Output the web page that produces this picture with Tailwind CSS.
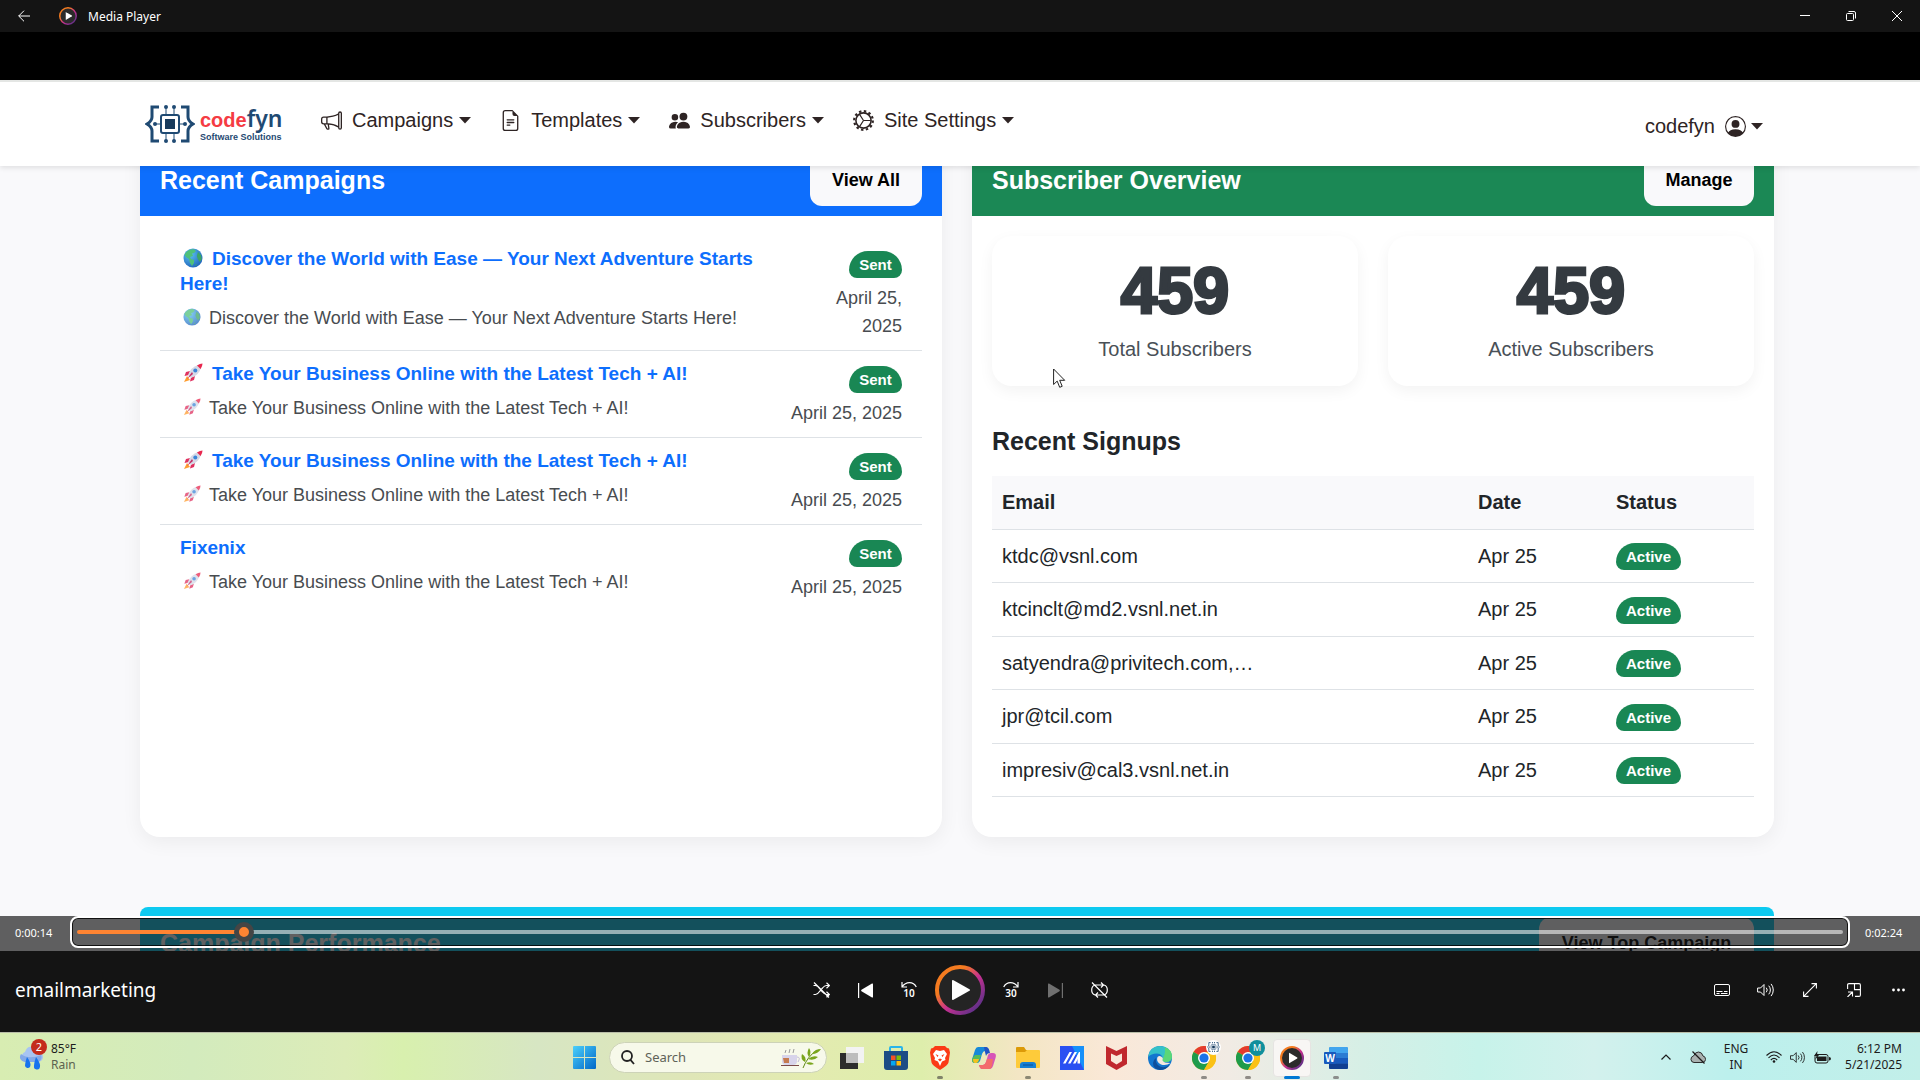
<!DOCTYPE html>
<html lang="en">
<head>
  <meta charset="UTF-8" />
  <meta name="viewport" content="width=device-width, initial-scale=1" />
  <title>Media Player</title>
  <script src="https://cdn.jsdelivr.net/npm/@tailwindcss/browser@4"></script>
</head>
<body class="h-screen flex flex-col overflow-hidden bg-black font-['Noto_Sans',sans-serif]">

  <!-- shared icons -->
  <svg class="absolute w-0 h-0" aria-hidden="true">
    <defs>
      <linearGradient id="ring" x1="0" y1="0" x2="1" y2="1"><stop offset="0.3" stop-color="#f47b20"/><stop offset="0.55" stop-color="#c73090"/><stop offset="0.9" stop-color="#5d3088"/></linearGradient>
      <radialGradient id="sea" cx="0.35" cy="0.3" r="0.8"><stop offset="0" stop-color="#5cc4f2"/><stop offset="1" stop-color="#1d5fb8"/></radialGradient>
      <linearGradient id="win" x1="0" y1="0" x2="1" y2="1"><stop offset="0" stop-color="#4cd0fb"/><stop offset="1" stop-color="#0067c8"/></linearGradient>
    </defs>
    <symbol id="globe" viewBox="0 0 20 20">
      <circle cx="10" cy="10" r="9.5" fill="url(#sea)"/>
      <path d="M3 4.500Q6 1 11 1.200L13 3 11 5 9 5.500 10 8 7 9 8 11 11 12 11 15 9 18 7 15 6 11 3 9 1.500 6.500Z" fill="#4fc07a"/>
      <path d="M15 4l3 3 .8 4-2 3-2-3-1-3zM12 17l2-1-1 2z" fill="#3da567"/>
    </symbol>
    <symbol id="rocket" viewBox="0 0 20 20">
      <path d="M4 13l-3 6 6-2z" fill="#ff9d2e"/>
      <path d="M7 8L3 9 1.500 13 6 12zM12 13l-1 4-4 1.500 1-4z" fill="#e0315f"/>
      <path d="M5 12Q8 4 15 2l3 3Q16 12 8 15z" fill="#d5d9e6"/>
      <path d="M14 2.400Q17 .5 19.500.5 19.500 3 17.600 6z" fill="#e8284f"/>
      <circle cx="12.300" cy="7.500" r="2" fill="#3b86d8"/>
      <path d="M9 9L4 16l6-5z" fill="#c42e66"/>
    </symbol>
    <symbol id="caret" viewBox="0 0 12 7"><path d="M0 0h12L6 6.500z" fill="currentColor"/></symbol>
    <symbol id="player" viewBox="0 0 24 24">
      <circle cx="12" cy="12" r="11" fill="#2b2b2b" stroke="url(#ring)" stroke-width="2"/>
      <path d="M9 7.200v9.600q0 .6.600.3l7.600-4.600q.6-.5 0-1L9.600 6.900Q9 6.600 9 7.200z" fill="#fff"/>
    </symbol>
    <symbol id="speaker" viewBox="0 0 18 14" fill="none" stroke="currentColor" stroke-linecap="round" stroke-linejoin="round">
      <path d="M1 5h2.500L7 1.500v11L3.500 9H1z"/><path d="M9.500 5a3 3 0 0 1 0 4"/><path d="M12 3a6 6 0 0 1 0 8"/><path d="M14.300 1.200a9 9 0 0 1 0 11.600"/>
    </symbol>
    <symbol id="chrome" viewBox="0 0 24 24">
      <circle cx="12" cy="12" r="12" fill="#fbc116"/>
      <path d="M12 12L1.600 6A12 12 0 0 1 22.400 6z" fill="#e33b2e"/>
      <path d="M12 12L1.600 6A12 12 0 0 0 12 24l5.200-9z" fill="#1e9b4b"/>
      <path d="M12 6h10.400A12 12 0 0 1 12 24l5.200-9z" fill="#fbc116"/>
      <circle cx="12" cy="12" r="6" fill="#fff"/><circle cx="12" cy="12" r="4.600" fill="#1a73e8"/>
    </symbol>
    <symbol id="chip" viewBox="0 0 50 44" fill="none" stroke="#1f4a73" stroke-width="3">
      <path d="M14 5H7v10q0 4-5 7 5 3 5 7v10h7M36 5h7v10q0 4 5 7-5 3-5 7v10h-7"/>
      <rect x="16" y="13" width="18" height="18" rx="2" stroke-width="2"/><rect x="20" y="17" width="10" height="10" fill="#173a5c" stroke="none"/>
      <path d="M21 13V6M29 13V6M21 31v7M29 31v7M16 22H9M34 22h7" stroke-width="1"/>
      <g fill="#1f4a73" stroke="none"><circle cx="21" cy="5" r="2"/><circle cx="29" cy="5" r="2"/><circle cx="21" cy="39" r="2"/><circle cx="29" cy="39" r="2"/><circle cx="10" cy="22" r="2"/><circle cx="40" cy="22" r="2"/></g>
    </symbol>
  </svg>

  <!-- title bar -->
  <header class="h-8 shrink-0 bg-[#141414] text-white flex items-center justify-between">
    <div class="flex items-center">
      <button aria-label="Back" class="w-12 h-8 grid place-items-center"><svg class="w-3 h-3" viewBox="0 0 12 12" fill="none" stroke="currentColor"><path d="M12 6H.7M6 .7L.7 6 6 11.300"/></svg></button>
      <svg class="w-[18px] h-[18px] ml-[11px] mr-[11px]"><use href="#player"/></svg>
      <span class="text-xs pt-[2px]">Media Player</span>
    </div>
    <div class="flex">
      <button aria-label="Minimize" class="w-[46px] h-8 grid place-items-center"><svg class="w-[10px] h-[10px]" viewBox="0 0 10 10" stroke="currentColor"><path d="M0 4.500h10"/></svg></button>
      <button aria-label="Restore" class="w-[46px] h-8 grid place-items-center"><svg class="w-[10px] h-[10px]" viewBox="0 0 10 10" fill="none" stroke="currentColor"><rect x=".5" y="2.500" width="7" height="7" rx="1"/><path d="M2.500.5H8q1.500 0 1.500 1.500v5.500"/></svg></button>
      <button aria-label="Close" class="w-[46px] h-8 grid place-items-center"><svg class="w-[10px] h-[10px]" viewBox="0 0 10 10" stroke="currentColor"><path d="M0 0l10 10M10 0L0 10"/></svg></button>
    </div>
  </header>

  <!-- video -->
  <section class="relative flex-1 min-h-0 overflow-hidden pt-12 font-['Liberation_Sans',Arial,sans-serif]">
    <div class="h-full bg-[#f9f9fb] overflow-hidden">
      <nav class="relative z-10 h-[86px] bg-white border-t-2 border-[#e4e6e4] shadow-[0_2px_5px_rgba(0,0,0,0.1)] pl-[145px] pr-[157px] flex items-center justify-between text-xl text-[#2e2424]">
        <div class="flex items-center">
          <a href="#" class="flex items-center w-[138px] mr-[38px]">
            <svg class="w-[50px] h-[44px] shrink-0"><use href="#chip"/></svg>
            <span class="flex flex-col pl-[5px]">
              <span class="flex items-baseline h-[25px] leading-[25px] font-bold"><span class="text-[#f53b43] text-xl font-['Liberation_Sans_Narrow','Liberation_Sans',sans-serif]">code</span><span class="text-[#1f4a73] text-[23px] font-semibold font-['Noto_Sans',sans-serif]">fyn</span></span>
              <span class="text-[#1f4a73] text-[9px] leading-3 font-bold whitespace-nowrap">Software Solutions</span>
            </span>
          </a>
          <div class="flex items-center gap-[29px] pb-2">
            <button class="flex items-center">
              <svg class="w-[21px] h-[21px] mr-[10px]" viewBox="0 0 16 16" fill="currentColor"><path d="M13 2.500a1.500 1.500 0 0 1 3 0v11a1.500 1.500 0 0 1-3 0v-.214c-2.162-1.241-4.490-1.843-6.912-2.083l.405 2.712A1 1 0 0 1 5.510 15.100h-.548a1 1 0 0 1-.916-.599l-1.850-3.490-.202-.003A2.014 2.014 0 0 1 0 9V7a2.020 2.020 0 0 1 1.992-2.013 75 75 0 0 0 2.483-.075c3.043-.154 6.148-.849 8.525-2.199zm1 0v11a.5.5 0 0 0 1 0v-11a.5.5 0 0 0-1 0m-1 1.350c-2.344 1.205-5.209 1.842-8 2.033v4.233q.27.015.537.036c2.568.189 5.093.744 7.463 1.993zm-9 6.215v-4.130a95 95 0 0 1-1.992.052A1.020 1.020 0 0 0 1 7v2c0 .55.448 1.002 1.006 1.009A61 61 0 0 1 4 10.065m-.657.975 1.609 3.037.01.024h.548l-.002-.014-.443-2.966a68 68 0 0 0-1.722-.082z"/></svg>
              Campaigns<svg class="w-3 h-[7px] ml-[6px]"><use href="#caret"/></svg>
            </button>
            <button class="flex items-center">
              <svg class="w-[21px] h-[21px] mr-[10px]" viewBox="0 0 16 16" fill="currentColor"><path d="M5.500 7a.5.5 0 0 0 0 1h5a.5.5 0 0 0 0-1zM5 9.500a.5.5 0 0 1 .5-.5h5a.5.5 0 0 1 0 1h-5a.5.5 0 0 1-.5-.5m0 2a.5.5 0 0 1 .5-.5h2a.5.5 0 0 1 0 1h-2a.5.5 0 0 1-.5-.5"/><path d="M9.500 0H4a2 2 0 0 0-2 2v12a2 2 0 0 0 2 2h8a2 2 0 0 0 2-2V4.500zm0 1v2A1.500 1.500 0 0 0 11 4.500h2V14a1 1 0 0 1-1 1H4a1 1 0 0 1-1-1V2a1 1 0 0 1 1-1z"/></svg>
              Templates<svg class="w-3 h-[7px] ml-[6px]"><use href="#caret"/></svg>
            </button>
            <button class="flex items-center">
              <svg class="w-[21px] h-[21px] mr-[10px]" viewBox="0 0 16 16" fill="currentColor"><path d="M7 14s-1 0-1-1 1-4 5-4 5 3 5 4-1 1-1 1zm4-6a3 3 0 1 0 0-6 3 3 0 0 0 0 6m-5.784 6A2.240 2.240 0 0 1 5 13c0-1.355.68-2.750 1.936-3.720A6.300 6.300 0 0 0 5 9c-4 0-5 3-5 4s1 1 1 1zM4.500 8a2.500 2.500 0 1 0 0-5 2.500 2.500 0 0 0 0 5"/></svg>
              Subscribers<svg class="w-3 h-[7px] ml-[6px]"><use href="#caret"/></svg>
            </button>
            <button class="flex items-center">
              <svg class="w-[21px] h-[21px] mr-[10px]" viewBox="0 0 16 16" fill="none" stroke="currentColor"><circle cx="8" cy="8" r="5.800" stroke-width="1.200"/><circle cx="8" cy="8" r="7.100" stroke-width="1.700" stroke-dasharray="1.860 1.860"/><path d="M8 8h5.500M8 8L5 3.300M8 8l-3 4.700" stroke-width=".9"/></svg>
              Site Settings<svg class="w-3 h-[7px] ml-[6px]"><use href="#caret"/></svg>
            </button>
          </div>
        </div>
        <button class="flex items-center pt-1">
          codefyn
          <svg class="w-[21px] h-[21px] ml-[10px] mr-[5px]" viewBox="0 0 16 16" fill="currentColor"><path d="M11 6a3 3 0 1 1-6 0 3 3 0 0 1 6 0"/><path fill-rule="evenodd" d="M0 8a8 8 0 1 1 16 0A8 8 0 0 1 0 8m8-7a7 7 0 0 0-5.468 11.370C3.242 11.226 4.805 10 8 10s4.757 1.225 5.468 2.370A7 7 0 0 0 8 1"/></svg>
          <svg class="w-3 h-[7px]"><use href="#caret"/></svg>
        </button>
      </nav>

      <main class="-mt-[22px] pl-[140px] pr-[146px]">
        <div class="grid grid-cols-2 gap-[30px]">

          <section class="bg-white rounded-b-[20px] shadow-[0_5px_20px_rgba(0,0,0,0.06)]">
            <div class="h-[72px] px-5 bg-[#0d6efd] flex items-center justify-between">
              <h2 class="pt-[2px] text-[25px] font-bold text-white">Recent Campaigns</h2>
              <button class="h-[52px] w-[112px] rounded-xl bg-[#f9f9fb] text-lg font-bold text-black">View All</button>
            </div>
            <ul class="p-5 text-[#484c50] text-lg leading-7">
              <li class="flex justify-between px-5 py-[10px] border-b border-[#dee2e6]">
                <div class="max-w-[620px]">
                  <a href="#" class="block text-[19px] leading-[25px] font-bold text-[#0d6efd] mb-2"><svg class="inline w-5 h-5 ml-[3px] mr-[9px] -mt-1"><use href="#globe"/></svg>Discover the World with Ease — Your Next Adventure Starts Here!</a>
                  <p><svg class="inline w-[18px] h-[18px] ml-[3px] mr-2 -mt-1 opacity-75"><use href="#globe"/></svg>Discover the World with Ease — Your Next Adventure Starts Here!</p>
                </div>
                <div class="pt-[5px] text-right flex flex-col items-end"><span class="mb-[6px] w-[53px] h-[27px] rounded-t-[19px] rounded-b-lg bg-[#198754] text-white text-[15px] leading-[27px] font-bold text-center">Sent</span><span class="w-20">April 25, 2025</span></div>
              </li>
              <li class="flex justify-between px-5 py-[10px] border-b border-[#dee2e6]">
                <div>
                  <a href="#" class="block text-[19px] leading-[25px] font-bold text-[#0d6efd] mb-2"><svg class="inline w-5 h-5 ml-[3px] mr-[9px] -mt-1"><use href="#rocket"/></svg>Take Your Business Online with the Latest Tech + AI!</a>
                  <p><svg class="inline w-[18px] h-[18px] ml-[3px] mr-2 -mt-1 opacity-75"><use href="#rocket"/></svg>Take Your Business Online with the Latest Tech + AI!</p>
                </div>
                <div class="pt-[5px] text-right flex flex-col items-end"><span class="mb-[6px] w-[53px] h-[27px] rounded-t-[19px] rounded-b-lg bg-[#198754] text-white text-[15px] leading-[27px] font-bold text-center">Sent</span><span>April 25, 2025</span></div>
              </li>
              <li class="flex justify-between px-5 py-[10px] border-b border-[#dee2e6]">
                <div>
                  <a href="#" class="block text-[19px] leading-[25px] font-bold text-[#0d6efd] mb-2"><svg class="inline w-5 h-5 ml-[3px] mr-[9px] -mt-1"><use href="#rocket"/></svg>Take Your Business Online with the Latest Tech + AI!</a>
                  <p><svg class="inline w-[18px] h-[18px] ml-[3px] mr-2 -mt-1 opacity-75"><use href="#rocket"/></svg>Take Your Business Online with the Latest Tech + AI!</p>
                </div>
                <div class="pt-[5px] text-right flex flex-col items-end"><span class="mb-[6px] w-[53px] h-[27px] rounded-t-[19px] rounded-b-lg bg-[#198754] text-white text-[15px] leading-[27px] font-bold text-center">Sent</span><span>April 25, 2025</span></div>
              </li>
              <li class="flex justify-between px-5 py-[10px]">
                <div>
                  <a href="#" class="block text-[19px] leading-[25px] font-bold text-[#0d6efd] mb-2">Fixenix</a>
                  <p><svg class="inline w-[18px] h-[18px] ml-[3px] mr-2 -mt-1 opacity-75"><use href="#rocket"/></svg>Take Your Business Online with the Latest Tech + AI!</p>
                </div>
                <div class="pt-[5px] text-right flex flex-col items-end"><span class="mb-[6px] w-[53px] h-[27px] rounded-t-[19px] rounded-b-lg bg-[#198754] text-white text-[15px] leading-[27px] font-bold text-center">Sent</span><span>April 25, 2025</span></div>
              </li>
            </ul>
          </section>

          <section class="bg-white rounded-b-[20px] shadow-[0_5px_20px_rgba(0,0,0,0.06)]">
            <div class="h-[72px] px-5 bg-[#1b8855] flex items-center justify-between">
              <h2 class="pt-[2px] text-[25px] font-bold text-white">Subscriber Overview</h2>
              <button class="h-[52px] w-[110px] rounded-xl bg-[#f9f9fb] text-lg font-bold text-black">Manage</button>
            </div>
            <div class="px-5 pt-5 pb-10 text-xl">
              <div class="grid grid-cols-2 gap-[30px] text-center text-[#495057]">
                <div class="h-[150px] pt-5 rounded-[20px] shadow-[0_5px_15px_rgba(0,0,0,0.05)]">
                  <p class="text-[65px] leading-[70px] font-bold text-[#343a40] [-webkit-text-stroke:3px_#343a40]">459</p>
                  <p class="mt-2 leading-[30px]">Total Subscribers</p>
                </div>
                <div class="h-[150px] pt-5 rounded-[20px] shadow-[0_5px_15px_rgba(0,0,0,0.05)]">
                  <p class="text-[65px] leading-[70px] font-bold text-[#343a40] [-webkit-text-stroke:3px_#343a40]">459</p>
                  <p class="mt-2 leading-[30px]">Active Subscribers</p>
                </div>
              </div>
              <h3 class="mt-10 mb-5 text-[25px] leading-[30px] font-bold text-[#212529]">Recent Signups</h3>
              <table class="w-full h-[321px] table-fixed border-collapse text-left text-[#212529]">
                <thead class="bg-[#f9f9fb]">
                  <tr class="h-[53px] border-b border-[#dee2e6]"><th class="px-[10px]">Email</th><th class="w-[138px] px-[10px]">Date</th><th class="w-[148px] px-[10px]">Status</th></tr>
                </thead>
                <tbody>
                  <tr class="border-b border-[#dee2e6]"><td class="px-[10px]">ktdc@vsnl.com</td><td class="px-[10px]">Apr 25</td><td class="px-[10px]"><span class="inline-block w-[65px] h-[27px] rounded-t-[19px] rounded-b-lg bg-[#198754] text-white text-[15px] leading-[27px] font-bold text-center">Active</span></td></tr>
                  <tr class="border-b border-[#dee2e6]"><td class="px-[10px]">ktcinclt@md2.vsnl.net.in</td><td class="px-[10px]">Apr 25</td><td class="px-[10px]"><span class="inline-block w-[65px] h-[27px] rounded-t-[19px] rounded-b-lg bg-[#198754] text-white text-[15px] leading-[27px] font-bold text-center">Active</span></td></tr>
                  <tr class="border-b border-[#dee2e6]"><td class="px-[10px]">satyendra@privitech.com,…</td><td class="px-[10px]">Apr 25</td><td class="px-[10px]"><span class="inline-block w-[65px] h-[27px] rounded-t-[19px] rounded-b-lg bg-[#198754] text-white text-[15px] leading-[27px] font-bold text-center">Active</span></td></tr>
                  <tr class="border-b border-[#dee2e6]"><td class="px-[10px]">jpr@tcil.com</td><td class="px-[10px]">Apr 25</td><td class="px-[10px]"><span class="inline-block w-[65px] h-[27px] rounded-t-[19px] rounded-b-lg bg-[#198754] text-white text-[15px] leading-[27px] font-bold text-center">Active</span></td></tr>
                  <tr class="border-b border-[#dee2e6]"><td class="px-[10px]">impresiv@cal3.vsnl.net.in</td><td class="px-[10px]">Apr 25</td><td class="px-[10px]"><span class="inline-block w-[65px] h-[27px] rounded-t-[19px] rounded-b-lg bg-[#198754] text-white text-[15px] leading-[27px] font-bold text-center">Active</span></td></tr>
                </tbody>
              </table>
            </div>
          </section>
        </div>

        <section class="mt-[70px] h-[72px] px-5 rounded-t-lg bg-[#0dcaf0] flex items-center justify-between">
          <h2 class="pt-[2px] text-[25px] font-bold text-white">Campaign Performance</h2>
          <button class="h-[52px] w-[215px] rounded-xl bg-[#f9f9fb] text-lg font-bold text-black">View Top Campaign</button>
        </section>
      </main>
    </div>

    <!-- mouse pointer -->
    <svg class="absolute left-[1053px] top-[336px] w-[13px] h-[21px]" viewBox="0 0 13 21"><path d="M.6 1v15.500l3.600-3.400 2.500 6.200 2.500-1-2.500-6h5z" fill="#fff" stroke="#222"/></svg>

    <!-- seek bar -->
    <div class="absolute inset-x-0 bottom-0 h-[35px] pb-[3px] bg-[#161616]/68 flex items-center text-[11px] text-white font-['Noto_Sans',sans-serif]">
      <span class="w-[70px] pl-[15px] pt-[2px]">0:00:14</span>
      <label class="flex-1 h-8 px-[5px] rounded-lg border-2 border-white ring-1 ring-inset ring-black/80 flex items-center">
        <input type="range" min="0" max="1000" value="90" aria-label="Seek" class="w-full h-1 appearance-none rounded-full bg-[linear-gradient(to_right,#ff8432_9%,#ffffff8c_9%)] [&::-webkit-slider-thumb]:appearance-none [&::-webkit-slider-thumb]:w-5 [&::-webkit-slider-thumb]:h-5 [&::-webkit-slider-thumb]:rounded-full [&::-webkit-slider-thumb]:bg-[#ff8432] [&::-webkit-slider-thumb]:border-5 [&::-webkit-slider-thumb]:border-[#454545]" />
      </label>
      <span class="w-[70px] pl-[15px] pt-[2px]">0:02:24</span>
    </div>
  </section>

  <!-- player controls -->
  <section class="h-[81px] shrink-0 bg-[#141414] text-white grid grid-cols-[1fr_auto_1fr] items-center pb-[3px]">
    <h1 class="pl-[15px] text-[19px]">emailmarketing</h1>
    <div class="flex items-center">
      <button aria-label="Shuffle off" class="w-11 h-11 grid place-items-center"><svg class="w-[17px] h-4" viewBox="0 0 17 16" fill="none" stroke="currentColor" stroke-width="1.200"><path d="M.5 12.500h2q2 0 4-3l3-3.500q2-2.500 4-2.500h3M13.500.8l3 2.700-3 2.700M.5 3.500h2q2 0 4 3l3 3.500q2 2.500 4 2.500h3M13.500 9.800l3 2.700-3 2.700M1 .5l15 15"/></svg></button>
      <button aria-label="Previous" class="w-11 h-11 grid place-items-center"><svg class="w-[15px] h-[15px]" viewBox="0 0 15 15" fill="currentColor"><path d="M0 0h1.200v15H0z"/><path d="M14 .5q1-.4 1 .8v12.400q0 1.200-1 .8L3.500 8.300q-.9-.8 0-1.600z"/></svg></button>
      <button aria-label="Back 10 seconds" class="w-11 h-11 grid place-items-center"><svg class="w-4 h-4 overflow-visible" viewBox="0 0 16 16" fill="none" stroke="currentColor" stroke-width="1.200"><path d="M1 0v5h5M1 5q3-4.300 7.500-4.300Q13 .7 15.300 5"/><text x="8" y="15" text-anchor="middle" font-size="10" font-weight="600" fill="currentColor" stroke="none">10</text></svg></button>
      <button aria-label="Play" class="w-[50px] h-[50px] mx-1"><svg class="w-[50px] h-[50px]" viewBox="0 0 50 50"><circle cx="25" cy="25" r="23" fill="#242424" stroke="url(#ring)" stroke-width="4"/><path d="M17 16v18q0 1.500 1.500.8l16-9q1.200-.8 0-1.600l-16-9Q17 14.500 17 16z" fill="#fff"/></svg></button>
      <button aria-label="Forward 30 seconds" class="w-11 h-11 grid place-items-center"><svg class="w-4 h-4 overflow-visible" viewBox="0 0 16 16" fill="none" stroke="currentColor" stroke-width="1.200"><path d="M15 0v5h-5M15 5Q12 .7 7.500.7 3 .7.700 5"/><text x="8" y="15" text-anchor="middle" font-size="10" font-weight="600" fill="currentColor" stroke="none">30</text></svg></button>
      <button aria-label="Next" disabled class="w-11 h-11 grid place-items-center text-[#707070]"><svg class="w-[15px] h-[15px]" viewBox="0 0 15 15" fill="currentColor"><path d="M13.800 0H15v15h-1.200z"/><path d="M1 .5Q0 .1 0 1.300v12.400q0 1.200 1 .8l10.500-6.200q.9-.8 0-1.600z"/></svg></button>
      <button aria-label="Repeat off" class="w-11 h-11 grid place-items-center"><svg class="w-[17px] h-4" viewBox="0 0 17 16" fill="none" stroke="currentColor" stroke-width="1.200"><path d="M4 13Q.7 12 .7 8T4 3h8M10 .5L12.500 3 10 5.500M13 3q3.300 1 3.300 5T13 13H5M7 10.500L4.500 13 7 15.500M1 .5l15 15"/></svg></button>
    </div>
    <div class="flex justify-end">
      <button aria-label="Subtitles" class="w-11 h-11 grid place-items-center"><svg class="w-4 h-3" viewBox="0 0 16 12" fill="none" stroke="currentColor"><rect x=".5" y=".5" width="15" height="11" rx="1.500"/><path d="M2.500 7.500h6M10 7.500h3.500M2.500 9.500h3M7 9.500h6.500"/></svg></button>
      <button aria-label="Volume" class="w-11 h-11 grid place-items-center"><svg class="w-[18px] h-[14px]"><use href="#speaker"/></svg></button>
      <button aria-label="Full screen" class="w-11 h-11 grid place-items-center"><svg class="w-[14px] h-[14px]" viewBox="0 0 14 14" fill="none" stroke="currentColor" stroke-width="1.100"><path d="M.7 13.300L13.300.7M8.500.6h4.900v4.900M.6 8.500v4.900h4.900"/></svg></button>
      <button aria-label="Mini player" class="w-11 h-11 grid place-items-center"><svg class="w-[14px] h-[14px]" viewBox="0 0 14 14" fill="none" stroke="currentColor" stroke-width="1.100"><path d="M.6 6V2Q.6.600 2 .6h10q1.400 0 1.400 1.400v10q0 1.400-1.400 1.400H8M7.500.6v6h6M1 9h4.500v4.500M5.500 9L.5 14"/></svg></button>
      <button aria-label="More" class="w-11 h-11 grid place-items-center"><svg class="w-[13px] h-1" viewBox="0 0 13 4" fill="currentColor"><circle cx="1.500" cy="2" r="1.400"/><circle cx="6.500" cy="2" r="1.400"/><circle cx="11.500" cy="2" r="1.400"/></svg></button>
    </div>
  </section>

  <!-- taskbar -->
  <footer class="h-12 shrink-0 border-t border-[#b9bda8] grid grid-cols-[1fr_auto_1fr] items-center text-xs text-[#1c1c1c] bg-[linear-gradient(to_right,#d8edb2_0%,#d3ebbd_10%,#dcecb8_18%,#d8f0ae_21%,#d7e6c3_28%,#dfe6b7_36%,#e3ebb0_42%,#deeeac_48%,#f3e6c4_53%,#fae8d8_58%,#f1ebe4_64%,#d6efe6_71%,#c7f3ea_77%,#d3f1ed_83%,#bcf0ed_90%,#c2efe9_100%)]">
    <button class="justify-self-start flex items-center text-left pl-[19px] pb-[2px] leading-4">
      <span class="relative w-8">
        <svg class="w-6 h-7" viewBox="0 0 24 28"><path d="M6 19a5.500 5.500 0 0 1 0-10Q8 3 13 4t6 5a5 5 0 0 1 0 10z" fill="#a8c4f2"/><path d="M6 19a5 5 0 0 1-4-8q8 6 20 1a5 5 0 0 1-3 7z" fill="#84a9e8"/><path d="M8 14q5 7 3 10a3 3 0 0 1-5-1q0-3 2-9zM17 14q5 7 4 10a3 3 0 0 1-6-1q0-3 2-9z" fill="#1673ee"/></svg>
        <span class="absolute left-3 -top-1 w-4 h-4 rounded-full bg-[#c42b1c] text-white text-[11px] leading-4 text-center">2</span>
      </span>
      <span class="flex flex-col"><span>85°F</span><span class="text-[#5c6350]">Rain</span></span>
    </button>
    <div class="flex items-center pb-px">
      <button aria-label="Start" class="w-11 h-12 grid place-items-center"><svg class="w-[23px] h-[23px]" viewBox="0 0 23 23" fill="url(#win)"><path d="M1 0h10v11H0V1q0-1 1-1zM12 0h10q1 0 1 1v10H12zM0 12h11v11H1q-1 0-1-1zM12 12h11v10q0 1-1 1H12z"/></svg></button>
      <label class="w-[218px] h-[31px] mx-[3px] pl-[11px] pr-[5px] rounded-full bg-[#f7f9ea] border border-[#cdd3b8] flex items-center">
        <svg class="w-[14px] h-[15px] shrink-0" viewBox="0 0 14 15" fill="none" stroke="#222" stroke-width="1.800"><circle cx="6" cy="6" r="5"/><path d="M9.500 9.800L13 14"/></svg>
        <input type="text" placeholder="Search" class="flex-1 min-w-0 ml-[10px] text-[13px] placeholder:text-[#5f6258] outline-none" />
        <svg class="w-[40px] h-5 shrink-0" viewBox="0 0 40 20"><path d="M4 5l1-3M8 5l1-4M12 5l1-4" stroke="#999" fill="none"/><path d="M1 7h15v6q0 4-4 4H5q-4 0-4-4z" fill="#d8d4ea"/><path d="M16 9q4 0 1 5" stroke="#c4bcd8" fill="none"/><path d="M2 10h6v5H3z" fill="#c57b50"/><path d="M0 17.500h18" stroke="#7b4a48"/><path d="M22 20Q26 9 36 2" stroke="#5f8a15" fill="none"/><path d="M24 14q-5-3-3-8 5 3 3 8zM28 9q-3-4 0-9 3 4 0 9zM27 11q5-4 10-2-4 4-10 2zM31 6q3-5 9-5-3 5-9 5zM25 15q5-2 8 1-5 2-8-1z" fill="#7aa51c"/></svg>
      </label>
      <button aria-label="Task view" class="w-11 h-12 grid place-items-center"><svg class="w-6 h-[22px]" viewBox="0 0 24 22"><path d="M0 6h18v16H0z" fill="#2c2c2c"/><path d="M6 0h18v16H6z" fill="#f3f3f3"/><path d="M6 6h12v10H6z" fill="#bdbdbd"/></svg></button>
      <button aria-label="Store" class="w-11 h-12 grid place-items-center"><svg class="w-6 h-6" viewBox="0 0 24 24"><path d="M6 6V2q0-1 1-1h10q1 0 1 1v4" stroke="#29b5ea" stroke-width="2" fill="none"/><path d="M0 5h24v16q0 3-3 3H3q-3 0-3-3z" fill="#1c4c85"/><path d="M7 9.500h4.500V14H7z" fill="#f35325"/><path d="M12.500 9.500H17V14h-4.500z" fill="#81bc06"/><path d="M7 15h4.500v4.500H7z" fill="#05a6f0"/><path d="M12.500 15H17v4.500h-4.500z" fill="#ffba08"/></svg></button>
      <button aria-label="Brave" class="relative w-11 h-12 grid place-items-center"><svg class="w-5 h-6" viewBox="0 0 20 24"><path d="M5 0h10l2 2 2 .5 1 4-1.500 10Q18 19 10 24 2 19 1.500 16.500L0 6.500l1-4L3 2z" fill="#fb3a16"/><path d="M6 4l4 1 4-1 3 4-2 4 .5 2-3.500 1.500L10 20l-2-4.500L4.500 14l.5-2-2-4z" fill="#fff"/><path d="M5.500 8l3 1.500-1 1.500zM14.500 8l-3 1.500 1 1.500zM8 13.500l2-1 2 1-2 2z" fill="#fb3a16"/></svg><span class="absolute bottom-[3px] w-[6px] h-[3px] rounded-full bg-[#80836a]"></span></button>
      <button aria-label="Copilot" class="w-11 h-12 grid place-items-center"><svg class="w-6 h-[22px]" viewBox="0 0 24 22"><path d="M6 0h8q2 0 3 4h-4q-2 0-3 3l-2 7q-1 2-3 2H3q-4 0-2.500-5L3 3q1-3 3-3z" fill="#1689d8"/><path d="M3 8h6l-2 6q-1 2-3 2H3q-4 0-2.500-5z" fill="#57bd58"/><path d="M1 12h6q-1 4-3 4H3q-2 0-2-4z" fill="#f3c220"/><path d="M18 22h-8q-2 0-3-4h4q2 0 3-3l2-7q1-2 3-2h2q4 0 2.500 5L21 19q-1 3-3 3z" fill="#d755b8"/><path d="M18 22h-8q-2 0-3-4h4q2 0 3-3l1-3h6l-1 7q-1 3-2 3z" fill="#f36c6b"/><path d="M12 0h2q3 0 4 6-3 0-4 3l-1-4z" fill="#2253c4"/></svg></button>
      <button aria-label="File Explorer" class="relative w-11 h-12 grid place-items-center"><svg class="w-6 h-[22px]" viewBox="0 0 24 22"><path d="M0 1q0-1 1-1h7l2 3h13v6H0z" fill="#dc9a08"/><path d="M0 5h9l2-2h12q1 0 1 1v16q0 1-1 1H1q-1 0-1-1z" fill="#fecb3a"/><path d="M4 21v-3q0-3 3-3h10q3 0 3 3v3z" fill="#1580d5"/><path d="M7 18h10" stroke="#0c4f92"/></svg><span class="absolute bottom-[3px] w-[6px] h-[3px] rounded-full bg-[#8c8874]"></span></button>
      <button aria-label="MyASUS" class="w-11 h-12 grid place-items-center"><svg class="w-6 h-6" viewBox="0 0 24 24"><path d="M0 0h24v24H0z" fill="#2a50f2"/><path d="M12 0h12v24z" fill="#1690fa"/><path d="M3 17.500h2.500L12 6H9.500zM8 17.500h2.500L17 6h-2.500zM13 17.500h2.500L20 9V6h-1z" fill="#fff"/><path d="M17.500 10l2.500-4v11.500h-2.500z" fill="#fff"/></svg></button>
      <button aria-label="McAfee" class="w-11 h-12 grid place-items-center"><svg class="w-[21px] h-6" viewBox="0 0 21 24"><path d="M0 0l10.500 5L21 0v18l-10.500 6L0 18zM5 7.500V15l5.500 3.500L16 15V7.500L10.500 10z" fill="#c0282d" fill-rule="evenodd"/></svg></button>
      <button aria-label="Edge" class="w-11 h-12 grid place-items-center"><svg class="w-6 h-6" viewBox="0 0 24 24"><circle cx="12" cy="12" r="12" fill="#1276cf"/><path d="M0 11Q2 0 12 0t12 10q0 6-6 6-5 0-3.500-3Q15 8 9 7.500 3 7.500 0 11z" fill="#35c1c8"/><path d="M17 1.200Q24 4 24 10q0 6-6 6-5 0-3.500-3 3-4 2.500-11.800z" fill="#5bd777"/><path d="M8 12q-1 6 4 8.500 5 2 10-2Q18 24 12 24 5 23 5 17q0-3 3-5z" fill="#0e4f9c"/><path d="M14.800 12Q12 8.500 9.500 11 7.500 16 13 18.500q5 1.500 9.500-1.500-7 0-8-2.500z" fill="#f5e9df"/></svg></button>
      <button aria-label="Chrome" class="relative w-11 h-12 grid place-items-center"><svg class="w-6 h-6"><use href="#chrome"/></svg><span class="absolute right-[5px] top-[6px] w-[15px] h-[15px] rounded-full bg-white grid place-items-center"><svg class="w-[13px] h-3"><use href="#chip"/></svg></span><span class="absolute bottom-[3px] w-[6px] h-[3px] rounded-full bg-[#8f8b86]"></span></button>
      <button aria-label="Chrome, profile M" class="relative w-11 h-12 grid place-items-center"><svg class="w-6 h-6"><use href="#chrome"/></svg><span class="absolute right-[5px] top-[6px] w-4 h-4 rounded-full bg-[#0f8f9c] text-white text-[9px] leading-4 text-center">M</span><span class="absolute bottom-[3px] w-[6px] h-[3px] rounded-full bg-[#8f8b86]"></span></button>
      <button aria-label="Media Player" class="relative w-11 h-12 grid place-items-center"><span class="w-[38px] h-[38px] rounded bg-[#f8f6f4] border border-[#e6e4e2] grid place-items-center"><svg class="w-6 h-6"><use href="#player"/></svg></span><span class="absolute bottom-[3px] w-4 h-[3px] rounded-full bg-[#0078d4]"></span></button>
      <button aria-label="Word" class="relative w-11 h-12 grid place-items-center"><svg class="w-6 h-[22px]" viewBox="0 0 24 22"><rect x="5" width="19" height="22" rx="1.500" fill="#2b7cd3"/><path d="M5 1.500Q5 0 6.500 0h16Q24 0 24 1.500V6H5z" fill="#41a5ee"/><path d="M5 11h19v5.500H5z" fill="#185abd"/><path d="M5 16.500h19v4q0 1.500-1.500 1.500h-16Q5 22 5 20.500z" fill="#103f91"/><rect y="5" width="12" height="12" rx="1" fill="#185abd"/><text x="6" y="14.500" text-anchor="middle" font-size="10" font-weight="700" fill="#fff">W</text></svg><span class="absolute bottom-[3px] w-[6px] h-[3px] rounded-full bg-[#8b8e8c]"></span></button>
    </div>
    <div class="justify-self-end flex items-center pr-[18px] pb-[2px] leading-4">
      <button aria-label="Show hidden icons" class="w-8 h-12 grid place-items-center"><svg class="w-[10px] h-[6px]" viewBox="0 0 10 6" fill="none" stroke="currentColor" stroke-width="1.200"><path d="M.5 5.500L5 1l4.500 4.500"/></svg></button>
      <button aria-label="OneDrive" class="w-8 h-12 grid place-items-center"><svg class="w-4 h-[13px]" viewBox="0 0 16 13"><path d="M4 11.500a3.300 3.300 0 0 1-.5-6.500Q5 1 8.500 1T13 5a3.300 3.300 0 0 1-.5 6.500z" fill="#a9b1b0" stroke="#2c2c2c"/><path d="M2.500.5l12 12" stroke="#1c1c1c" stroke-width="1.200"/></svg></button>
      <button class="w-11 text-center">ENG<br>IN</button>
      <button class="flex items-center gap-2 px-2" aria-label="Network, volume, battery">
        <svg class="w-4 h-3" viewBox="0 0 16 12" fill="none" stroke="currentColor" stroke-width="1.100"><path d="M.5 4.500q7.500-7.500 15 0M2.500 6.800q5.500-5.500 11 0M4.800 9q3.200-3.200 6.400 0"/><circle cx="8" cy="10.500" r="1.300" fill="currentColor" stroke="none"/></svg>
        <svg class="w-4 h-[13px]"><use href="#speaker"/></svg>
        <svg class="w-[17px] h-[13px]" viewBox="0 0 17 13"><rect x="1" y="3.500" width="13" height="8.500" rx="2" fill="none" stroke="currentColor"/><path d="M3 5.500h9.500V10H3z" fill="currentColor"/><path d="M15 6q2 0 2 1.700T15 9.500z" fill="currentColor"/><path d="M3.500 0L0 5h2.500L1 9l4-5H3z" fill="currentColor"/></svg>
      </button>
      <button class="pl-[6px] text-right">6:12 PM<br>5/21/2025</button>
    </div>
  </footer>
</body>
</html>
